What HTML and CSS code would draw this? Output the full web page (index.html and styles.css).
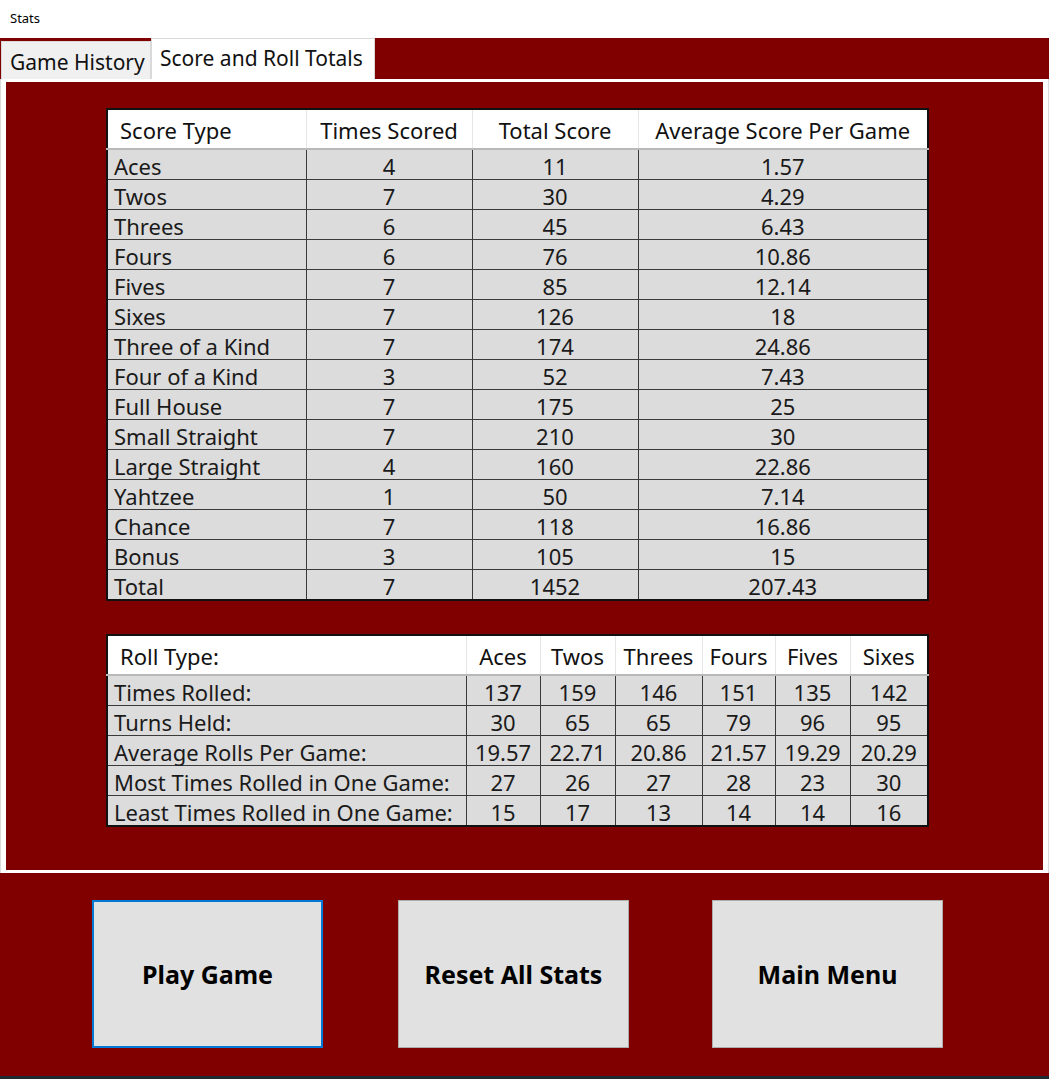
FILE: index.html
```html
<!DOCTYPE html>
<html>
<head>
<meta charset="utf-8">
<title>Stats</title>
<link rel="stylesheet" href="styles.css">
</head>
<body>
<div class="window">
  <div class="titlebar">Stats</div>
  <div class="tabstrip">
    <div class="tab tab-inactive">Game History</div>
    <div class="tab tab-active">Score and Roll Totals</div>
  </div>
  <div class="page">
    <div class="page-inner">
      <table class="grid score-grid">
        <colgroup>
          <col class="c-s1"><col class="c-s2"><col class="c-s3"><col class="c-s4">
        </colgroup>
        <thead>
          <tr><th class="first">Score Type</th><th>Times Scored</th><th>Total Score</th><th>Average Score Per Game</th></tr>
        </thead>
        <tbody>
          <tr><td class="first">Aces</td><td>4</td><td>11</td><td>1.57</td></tr>
          <tr><td class="first">Twos</td><td>7</td><td>30</td><td>4.29</td></tr>
          <tr><td class="first">Threes</td><td>6</td><td>45</td><td>6.43</td></tr>
          <tr><td class="first">Fours</td><td>6</td><td>76</td><td>10.86</td></tr>
          <tr><td class="first">Fives</td><td>7</td><td>85</td><td>12.14</td></tr>
          <tr><td class="first">Sixes</td><td>7</td><td>126</td><td>18</td></tr>
          <tr><td class="first">Three of a Kind</td><td>7</td><td>174</td><td>24.86</td></tr>
          <tr><td class="first">Four of a Kind</td><td>3</td><td>52</td><td>7.43</td></tr>
          <tr><td class="first">Full House</td><td>7</td><td>175</td><td>25</td></tr>
          <tr><td class="first">Small Straight</td><td>7</td><td>210</td><td>30</td></tr>
          <tr><td class="first">Large Straight</td><td>4</td><td>160</td><td>22.86</td></tr>
          <tr><td class="first">Yahtzee</td><td>1</td><td>50</td><td>7.14</td></tr>
          <tr><td class="first">Chance</td><td>7</td><td>118</td><td>16.86</td></tr>
          <tr><td class="first">Bonus</td><td>3</td><td>105</td><td>15</td></tr>
          <tr><td class="first">Total</td><td>7</td><td>1452</td><td>207.43</td></tr>
        </tbody>
      </table>

      <table class="grid roll-grid">
        <colgroup>
          <col class="c-r1"><col class="c-r2"><col class="c-r3"><col class="c-r4"><col class="c-r5"><col class="c-r6"><col class="c-r7">
        </colgroup>
        <thead>
          <tr><th class="first">Roll Type:</th><th>Aces</th><th>Twos</th><th>Threes</th><th>Fours</th><th>Fives</th><th>Sixes</th></tr>
        </thead>
        <tbody>
          <tr><td class="first">Times Rolled:</td><td>137</td><td>159</td><td>146</td><td>151</td><td>135</td><td>142</td></tr>
          <tr><td class="first">Turns Held:</td><td>30</td><td>65</td><td>65</td><td>79</td><td>96</td><td>95</td></tr>
          <tr><td class="first">Average Rolls Per Game:</td><td>19.57</td><td>22.71</td><td>20.86</td><td>21.57</td><td>19.29</td><td>20.29</td></tr>
          <tr><td class="first">Most Times Rolled in One Game:</td><td>27</td><td>26</td><td>27</td><td>28</td><td>23</td><td>30</td></tr>
          <tr><td class="first">Least Times Rolled in One Game:</td><td>15</td><td>17</td><td>13</td><td>14</td><td>14</td><td>16</td></tr>
        </tbody>
      </table>
    </div>
  </div>
  <div class="actions">
    <button class="btn btn-focus">Play Game</button>
    <button class="btn">Reset All Stats</button>
    <button class="btn btn-last">Main Menu</button>
  </div>
  <div class="taskbar"></div>
</div>
</body>
</html>
```

FILE: styles.css
```css
* { box-sizing: border-box; }
html, body {
  margin: 0;
  padding: 0;
  background: #ffffff;
}
body {
  font-family: "Noto Sans", "Open Sans", sans-serif;
  color: #111;
  width: 1049px;
  height: 1079px;
  overflow: hidden;
}
.window {
  display: flex;
  flex-direction: column;
  height: 1079px;
}
.titlebar {
  height: 38px;
  padding: 9px 0 0 10px;
  font-size: 13px;
  line-height: 18px;
  background: #ffffff;
  color: #000;
}
.tabstrip {
  height: 41px;
  background: #800000;
  display: flex;
  align-items: flex-end;
  padding-left: 1px;
}
.tab {
  font-size: 21px;
  line-height: 24px;
  color: #111;
  white-space: nowrap;
}
.tab-inactive {
  width: 150px;
  height: 38px;
  background: #f0f0f0;
  border: 1px solid #d9d9d9;
  border-bottom: none;
  padding: 8px 0 0 8px;
}
.tab-active {
  width: 224px;
  height: 41px;
  background: #ffffff;
  border: 1px solid #d9d9d9;
  border-bottom: none;
  padding: 7px 0 0 8px;
}
.page {
  height: 794px;
  background: #ffffff;
  border-left: 1px solid #d9d9d9;
  border-right: 1px solid #d9d9d9;
  padding: 3px 5px 3px 5px;
}
.page-inner {
  height: 100%;
  background: #800000;
  padding: 26px 0 0 100px;
  display: flex;
  flex-direction: column;
  gap: 33px;
}
.grid {
  border-collapse: collapse;
  table-layout: fixed;
  width: 823px;
  border: 2px solid #111;
  font-size: 22px;
}
.grid th {
  height: 40px;
  background: #ffffff;
  font-weight: normal;
  text-align: center;
  padding: 1px 0 0 0;
  border-right: 1px solid #e6e6e6;
  border-bottom: 2px solid #b9b9b9;
  white-space: nowrap;
  line-height: 26px;
  color: #111;
}
.grid th.first {
  text-align: left;
  padding-left: 12px;
}
.grid td {
  height: 30px;
  background: #dcdcdc;
  text-align: center;
  padding: 3px 0 0 0;
  border: 1px solid #3a3a3a;
  line-height: 26px;
  white-space: nowrap;
  color: #1a1a1a;
}
.grid td.first {
  text-align: left;
  padding-left: 6px;
}
.c-s1 { width: 199px; }
.c-s2 { width: 166px; }
.c-s3 { width: 166px; }
.c-s4 { width: 290px; }

.c-r1 { width: 359px; }
.c-r2 { width: 74px; }
.c-r3 { width: 75px; }
.c-r4 { width: 87px; }
.c-r5 { width: 73px; }
.c-r6 { width: 75px; }
.c-r7 { width: 78px; }

.actions {
  height: 203px;
  background: #800000;
  display: flex;
  align-items: flex-start;
  padding: 27px 0 0 92px;
  gap: 75px;
}
.btn {
  width: 231px;
  height: 148px;
  background: #e1e1e1;
  border: 1px solid #adadad;
  font-family: "Noto Sans", "Open Sans", sans-serif;
  font-weight: bold;
  font-size: 25px;
  color: #000;
  padding: 0;
  margin: 0;
}
.btn-focus {
  border: 2px solid #0078d7;
}
.btn-last {
  margin-left: 8px;
}
.taskbar {
  flex: 1;
  background: #1f2a30;
}
```
